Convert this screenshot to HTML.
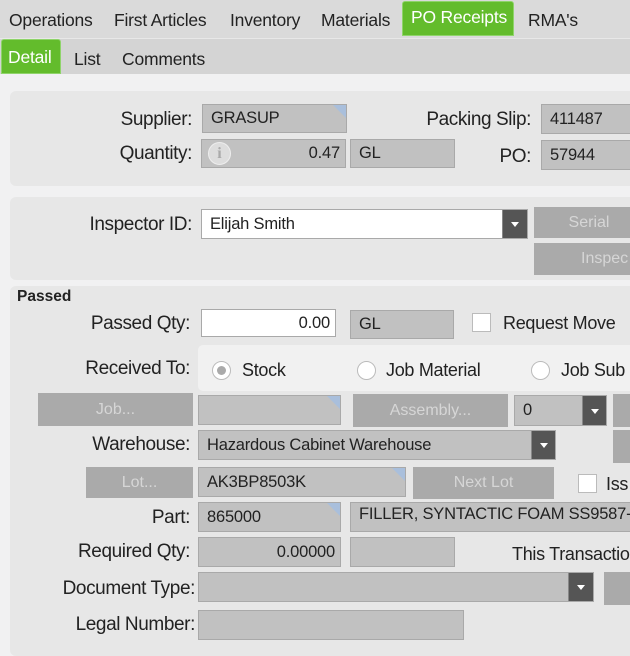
<!DOCTYPE html>
<html><head><meta charset="utf-8"><style>
*{box-sizing:border-box;margin:0;padding:0}
body{width:630px;height:643px;overflow:hidden;background:#f1f1f2;font-family:"Liberation Sans",sans-serif;color:#222;position:relative}
.a{position:absolute;white-space:nowrap}
.bar1{left:0;top:0;width:630px;height:38px;background:#dadada}
.bar2{left:0;top:38px;width:630px;height:36px;background:#d4d4d4;border-top:1px solid #e8e8e8}
.tab{font-size:17.5px;top:10px;letter-spacing:-0.2px}
.tab2{font-size:17.5px;top:49px;letter-spacing:-0.2px}
.gt{background:#63bc2c;border:1px solid #8fd46a;border-radius:3px 3px 0 0;color:#fff}
.panel{background:#e7e7e7;border-radius:6px}
.lbl{font-size:19px;text-align:right;letter-spacing:-0.4px}
.f{background:#c1c1c1;border:1px solid #a9a9a9;font-size:16.5px;padding-left:8px;display:flex;align-items:center;letter-spacing:-0.2px}
.w{background:#fff;border:1px solid #a9a9a9;font-size:16.5px;padding-left:8px;display:flex;align-items:center;letter-spacing:-0.2px}
.c:after{content:"";position:absolute;right:0;top:0;border-top:13px solid #a9bfdc;border-left:13px solid transparent}
.btn{background:#aaaaaa;color:#d6d6d6;font-size:16px;display:flex;align-items:center;justify-content:center}
.arr{background:#555;border-left:1px solid #888}
.arr:after{content:"";position:absolute;left:50%;top:50%;margin:-2px 0 0 -4px;border-top:5px solid #fff;border-left:4px solid transparent;border-right:4px solid transparent}
.rad{width:19px;height:19px;border-radius:50%;border:1px solid #bbb;background:#fff}
.chk{width:19px;height:19px;border:1px solid #bbb;background:#fff}
.t{font-size:18px;letter-spacing:-0.3px}
</style></head><body>
<div class="a bar1"></div>
<div class="a bar2"></div>
<div class="a tab" style="left:9px">Operations</div>
<div class="a tab" style="left:114px">First Articles</div>
<div class="a tab" style="left:230px">Inventory</div>
<div class="a tab" style="left:321px">Materials</div>
<div class="a gt" style="left:402px;top:1px;width:112px;height:35px"></div>
<div class="a tab" style="left:411px;top:7px;color:#fff">PO Receipts</div>
<div class="a tab" style="left:528px">RMA's</div>
<div class="a gt" style="left:1px;top:39px;width:60px;height:35px"></div>
<div class="a tab2" style="left:8px;top:47px;color:#fff">Detail</div>
<div class="a tab2" style="left:74px">List</div>
<div class="a tab2" style="left:122px">Comments</div>

<div class="a panel" style="left:10px;top:91px;width:630px;height:95px"></div>
<div class="a lbl" style="right:438px;top:109px">Supplier:</div>
<div class="a f c" style="left:202px;top:104px;width:145px;height:29px">GRASUP</div>
<div class="a lbl" style="right:99px;top:109px">Packing Slip:</div>
<div class="a f" style="left:541px;top:104px;width:100px;height:30px">411487</div>
<div class="a lbl" style="right:438px;top:143px">Quantity:</div>
<div class="a f" style="left:201px;top:139px;width:145px;height:29px;justify-content:flex-end;padding-right:5px">0.47</div>
<div class="a" style="left:208px;top:142px;width:23px;height:23px;border-radius:50%;background:#ddd;border:1px solid #eee;color:#aaa;font:bold 16px 'Liberation Serif',serif;text-align:center;line-height:22px">i</div>
<div class="a f" style="left:350px;top:139px;width:105px;height:29px">GL</div>
<div class="a lbl" style="right:99px;top:146px">PO:</div>
<div class="a f" style="left:541px;top:140px;width:100px;height:30px">57944</div>

<div class="a panel" style="left:10px;top:197px;width:630px;height:83px"></div>
<div class="a lbl" style="right:438px;top:214px">Inspector ID:</div>
<div class="a w" style="left:201px;top:209px;width:327px;height:30px">Elijah Smith</div>
<div class="a arr" style="left:502px;top:210px;width:25px;height:28px"></div>
<div class="a btn" style="left:534px;top:207px;width:110px;height:31px">Serial</div>
<div class="a btn" style="left:534px;top:243px;width:110px;height:32px;justify-content:flex-start;padding-left:47px">Inspec</div>

<div class="a panel" style="left:10px;top:286px;width:630px;height:370px"></div>
<div class="a" style="left:17px;top:288px;font-size:15.5px;font-weight:bold">Passed</div>
<div class="a lbl" style="right:440px;top:313px">Passed Qty:</div>
<div class="a w" style="left:201px;top:309px;width:135px;height:28px;justify-content:flex-end;padding-right:5px">0.00</div>
<div class="a f" style="left:350px;top:310px;width:104px;height:29px">GL</div>
<div class="a chk" style="left:472px;top:313px"></div>
<div class="a t" style="left:503px;top:313px">Request Move</div>

<div class="a" style="left:198px;top:345px;width:440px;height:46px;background:#f1f1f1;border-radius:5px"></div>
<div class="a lbl" style="right:440px;top:358px">Received To:</div>
<div class="a rad" style="left:212px;top:361px"></div>
<div class="a" style="left:217px;top:366px;width:9px;height:9px;border-radius:50%;background:#aaa"></div>
<div class="a t" style="left:242px;top:360px">Stock</div>
<div class="a rad" style="left:357px;top:361px"></div>
<div class="a t" style="left:386px;top:360px">Job Material</div>
<div class="a rad" style="left:531px;top:361px"></div>
<div class="a t" style="left:561px;top:360px">Job Sub</div>

<div class="a btn" style="left:38px;top:393px;width:155px;height:33px">Job...</div>
<div class="a f c" style="left:198px;top:395px;width:143px;height:30px"></div>
<div class="a btn" style="left:353px;top:394px;width:155px;height:33px">Assembly...</div>
<div class="a f" style="left:514px;top:395px;width:93px;height:31px">0</div>
<div class="a arr" style="left:582px;top:396px;width:24px;height:29px"></div>
<div class="a btn" style="left:613px;top:394px;width:30px;height:33px"></div>
<div class="a btn" style="left:613px;top:430px;width:30px;height:33px"></div>

<div class="a lbl" style="right:440px;top:434px">Warehouse:</div>
<div class="a f" style="left:198px;top:430px;width:358px;height:30px">Hazardous Cabinet Warehouse</div>
<div class="a arr" style="left:531px;top:431px;width:24px;height:28px"></div>

<div class="a btn" style="left:86px;top:467px;width:107px;height:31px">Lot...</div>
<div class="a f c" style="left:198px;top:467px;width:208px;height:30px">AK3BP8503K</div>
<div class="a btn" style="left:413px;top:467px;width:141px;height:32px">Next Lot</div>
<div class="a chk" style="left:578px;top:474px"></div>
<div class="a t" style="left:606px;top:474px">Iss</div>

<div class="a lbl" style="right:440px;top:507px">Part:</div>
<div class="a f c" style="left:198px;top:502px;width:143px;height:30px">865000</div>
<div class="a f" style="left:350px;top:502px;width:300px;height:30px;align-items:flex-start;padding-top:2px;overflow:hidden">FILLER, SYNTACTIC FOAM SS9587-</div>

<div class="a lbl" style="right:440px;top:541px">Required Qty:</div>
<div class="a f" style="left:198px;top:537px;width:143px;height:30px;justify-content:flex-end;padding-right:5px">0.00000</div>
<div class="a f" style="left:350px;top:537px;width:105px;height:30px"></div>
<div class="a t" style="left:512px;top:544px">This Transactio</div>

<div class="a lbl" style="right:435px;top:578px">Document Type:</div>
<div class="a f" style="left:198px;top:572px;width:396px;height:30px"></div>
<div class="a arr" style="left:568px;top:573px;width:25px;height:28px"></div>
<div class="a btn" style="left:604px;top:572px;width:40px;height:33px"></div>

<div class="a lbl" style="right:435px;top:614px">Legal Number:</div>
<div class="a f" style="left:198px;top:610px;width:266px;height:30px"></div>
</body></html>
